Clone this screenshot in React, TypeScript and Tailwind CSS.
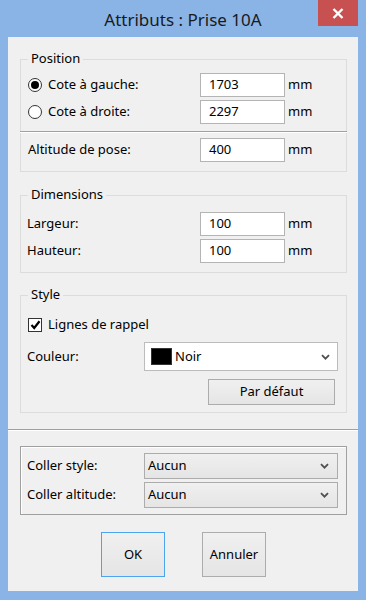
import React from "react";

function Chevron() {
  return (
    <svg width="9" height="6" viewBox="0 0 9 6" className="shrink-0">
      <polyline points="1,1.2 4.5,4.7 8,1.2" fill="none" stroke="#505050" strokeWidth="1.8" />
    </svg>
  );
}

function Field({ value }: { value: string }) {
  return (
    <>
      <div className="w-[85px] h-[24px] bg-white border border-[#b4b4b4] flex items-center pl-[8px] text-black">
        {value}
      </div>
      <span className="ml-[3px] text-black">mm</span>
    </>
  );
}

function Radio({ checked }: { checked?: boolean }) {
  return (
    <span className="w-[14px] h-[14px] rounded-full border border-[#333] bg-white flex items-center justify-center shrink-0">
      {checked && <span className="w-[8px] h-[8px] rounded-full bg-black" />}
    </span>
  );
}

function GroupBox({
  legend,
  className,
  children,
}: {
  legend: string;
  className: string;
  children: React.ReactNode;
}) {
  return (
    <div className={"relative ml-[12px] w-[327px] border border-[#dcdcdc] flex flex-col " + className}>
      <span className="absolute left-[7px] -top-[10px] px-[3px] bg-[#f0f0f0] leading-[16px] text-black">
        {legend}
      </span>
      {children}
    </div>
  );
}

export default function App() {
  return (
    <div className="w-[366px] h-[600px] bg-[#8ab4e6] flex flex-col font-['Noto_Sans',sans-serif] text-[13px]">
      {/* title bar */}
      <div className="h-[37px] grid grid-cols-[1fr_auto_1fr] items-start shrink-0">
        <div />
        <div className="text-[17px] leading-[37px] pt-[1px] text-[#1a1a1a]">Attributs : Prise 10A</div>
        <div className="justify-self-end mr-[8px] w-[40px] h-[26px] bg-[#c75050] flex items-center justify-center">
          <svg width="12" height="11" viewBox="0 0 12 11">
            <path d="M1.5 1 L10.5 10 M10.5 1 L1.5 10" stroke="#fff" strokeWidth="2.4" />
          </svg>
        </div>
      </div>

      {/* client area */}
      <div className="mx-[8px] mb-[9px] flex-1 bg-[#f0f0f0] flex flex-col">
        <GroupBox legend="Position" className="mt-[22px] h-[113px] pt-[13px]">
          <div className="flex items-center h-[24px] pl-[7px]">
            <div className="w-[172px] flex items-center">
              <Radio checked />
              <span className="ml-[6px] text-black">Cote à gauche:</span>
            </div>
            <Field value="1703" />
          </div>
          <div className="flex items-center h-[24px] pl-[7px] mt-[3px]">
            <div className="w-[172px] flex items-center">
              <Radio />
              <span className="ml-[6px] text-black">Cote à droite:</span>
            </div>
            <Field value="2297" />
          </div>
          <div className="-mx-px mt-[7px] h-[2px] border-t border-[#a0a0a0] bg-white" />
          <div className="flex items-center h-[24px] pl-[7px] mt-[5px]">
            <div className="w-[172px] text-black">Altitude de pose:</div>
            <Field value="400" />
          </div>
        </GroupBox>

        <GroupBox legend="Dimensions" className="mt-[23px] h-[78px] pt-[16px]">
          <div className="flex items-center h-[24px] pl-[6px]">
            <div className="w-[173px] text-black">Largeur:</div>
            <Field value="100" />
          </div>
          <div className="flex items-center h-[24px] pl-[6px] mt-[3px]">
            <div className="w-[173px] text-black">Hauteur:</div>
            <Field value="100" />
          </div>
        </GroupBox>

        <GroupBox legend="Style" className="mt-[22px] h-[118px] pt-[21px]">
          <div className="flex items-center h-[16px] pl-[7px]">
            <span className="w-[14px] h-[14px] border border-[#333] bg-white flex items-center justify-center">
              <svg width="11" height="10" viewBox="0 0 11 10">
                <polyline points="1.5,5 4.2,8 9.5,1.2" fill="none" stroke="#000" strokeWidth="2.2" />
              </svg>
            </span>
            <span className="ml-[6px] text-black">Lignes de rappel</span>
          </div>
          <div className="flex items-center h-[29px] pl-[6px] mt-[9px]">
            <div className="w-[117px] text-black">Couleur:</div>
            <div className="w-[194px] h-[29px] bg-white border border-[#bcbcbc] flex items-center pl-[6px] pr-[7px]">
              <span className="w-[21px] h-[17px] bg-black border border-[#333]" />
              <span className="ml-[3px] flex-1 text-black">Noir</span>
              <Chevron />
            </div>
          </div>
          <div className="flex mt-[8px] pl-[187px]">
            <div className="w-[127px] h-[26px] border border-[#acacac] bg-gradient-to-b from-[#f0f0f0] to-[#e5e5e5] flex items-center justify-center text-black">
              Par défaut
            </div>
          </div>
        </GroupBox>

        <div className="mt-[16px] h-[2px] border-t border-[#a0a0a0] bg-white" />

        <div className="ml-[12px] mt-[15px] w-[327px] h-[69px] border border-[#a0a0a0] shadow-[inset_1px_1px_0_#fff] flex flex-col pt-[6px]">
          <div className="flex items-center h-[26px] pl-[6px]">
            <div className="w-[117px] text-black">Coller style:</div>
            <div className="w-[194px] h-[26px] border border-[#acacac] bg-gradient-to-b from-[#f0f0f0] to-[#e5e5e5] flex items-center pl-[3px] pr-[8px]">
              <span className="flex-1 text-black">Aucun</span>
              <Chevron />
            </div>
          </div>
          <div className="flex items-center h-[26px] pl-[6px] mt-[3px]">
            <div className="w-[117px] text-black">Coller altitude:</div>
            <div className="w-[194px] h-[26px] border border-[#acacac] bg-gradient-to-b from-[#f0f0f0] to-[#e5e5e5] flex items-center pl-[3px] pr-[8px]">
              <span className="flex-1 text-black">Aucun</span>
              <Chevron />
            </div>
          </div>
        </div>

        <div className="flex mt-[17px] pl-[93px] gap-[37px]">
          <button className="w-[64px] h-[45px] border border-[#4ea3ef] bg-gradient-to-b from-[#f0f0f0] to-[#e5e5e5] text-black">
            OK
          </button>
          <button className="w-[64px] h-[45px] border border-[#acacac] bg-gradient-to-b from-[#f0f0f0] to-[#e5e5e5] text-black">
            Annuler
          </button>
        </div>
      </div>
    </div>
  );
}
